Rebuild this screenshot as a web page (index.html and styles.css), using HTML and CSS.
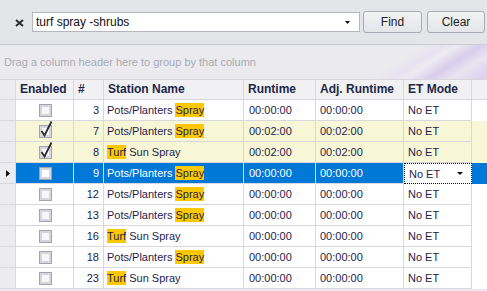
FILE: index.html
```html
<!DOCTYPE html>
<html lang="en">
<head>
    <meta charset="UTF-8">
    <title>stations</title>
    <link rel="stylesheet" href="styles.css">
</head>
<body>

<div class="toolbar">
    <svg class="close-icon" width="9" height="8" viewBox="0 0 9 8"><path d="M1 1 L8 7 M8 1 L1 7" stroke="#2b2b30" stroke-width="2"/></svg>
    <div class="combo">
        <span>turf spray -shrubs</span>
        <svg class="arrow" width="5" height="3" viewBox="0 0 5 3"><path d="M0 0 H5 L2.5 3 Z" fill="#111"/></svg>
    </div>
    <div class="btn find">Find</div>
    <div class="btn clear">Clear</div>
</div>

<div class="group-panel">Drag a column header here to group by that column</div>

<div class="grid">
    <div class="row head">
        <div class="cell ind"></div>
        <div class="cell">Enabled</div>
        <div class="cell">#</div>
        <div class="cell">Station Name</div>
        <div class="cell">Runtime</div>
        <div class="cell">Adj. Runtime</div>
        <div class="cell">ET Mode</div>
        <div class="cell fill"></div>
    </div>

    <div class="row">
        <div class="cell ind"></div>
        <div class="cell chk"><span class="box"></span></div>
        <div class="cell num">3</div>
        <div class="cell name">Pots/Planters <mark>Spray</mark></div>
        <div class="cell time">00:00:00</div>
        <div class="cell">00:00:00</div>
        <div class="cell">No ET</div>
        <div class="cell fill"></div>
    </div>
    <div class="row checked">
        <div class="cell ind"></div>
        <div class="cell chk"><span class="box"><svg viewBox="0 0 14 18" width="14" height="18"><path d="M2.5 11 L5.5 15.5 L12.5 1.5" fill="none" stroke="#2a2a2e" stroke-width="1.8"/></svg></span></div>
        <div class="cell num">7</div>
        <div class="cell name">Pots/Planters <mark>Spray</mark></div>
        <div class="cell time">00:02:00</div>
        <div class="cell">00:02:00</div>
        <div class="cell">No ET</div>
        <div class="cell fill"></div>
    </div>
    <div class="row checked">
        <div class="cell ind"></div>
        <div class="cell chk"><span class="box"><svg viewBox="0 0 14 18" width="14" height="18"><path d="M2.5 11 L5.5 15.5 L12.5 1.5" fill="none" stroke="#2a2a2e" stroke-width="1.8"/></svg></span></div>
        <div class="cell num">8</div>
        <div class="cell name"><mark>Turf</mark> Sun Spray</div>
        <div class="cell time">00:02:00</div>
        <div class="cell">00:02:00</div>
        <div class="cell">No ET</div>
        <div class="cell fill"></div>
    </div>
    <div class="row selected">
        <div class="cell ind"><svg width="4" height="7" viewBox="0 0 4 7"><path d="M0 0 L4 3.5 L0 7 Z" fill="#111"/></svg></div>
        <div class="cell chk"><span class="box"></span></div>
        <div class="cell num">9</div>
        <div class="cell name">Pots/Planters <mark>Spray</mark></div>
        <div class="cell time">00:00:00</div>
        <div class="cell">00:00:00</div>
        <div class="cell editor">No ET
            <svg class="arrow" width="6" height="3" viewBox="0 0 6 3"><path d="M0 0 H6 L3 3 Z" fill="#111"/></svg>
        </div>
        <div class="cell fill"></div>
    </div>
    <div class="row">
        <div class="cell ind"></div>
        <div class="cell chk"><span class="box"></span></div>
        <div class="cell num">12</div>
        <div class="cell name">Pots/Planters <mark>Spray</mark></div>
        <div class="cell time">00:00:00</div>
        <div class="cell">00:00:00</div>
        <div class="cell">No ET</div>
        <div class="cell fill"></div>
    </div>
    <div class="row">
        <div class="cell ind"></div>
        <div class="cell chk"><span class="box"></span></div>
        <div class="cell num">13</div>
        <div class="cell name">Pots/Planters <mark>Spray</mark></div>
        <div class="cell time">00:00:00</div>
        <div class="cell">00:00:00</div>
        <div class="cell">No ET</div>
        <div class="cell fill"></div>
    </div>
    <div class="row">
        <div class="cell ind"></div>
        <div class="cell chk"><span class="box"></span></div>
        <div class="cell num">16</div>
        <div class="cell name"><mark>Turf</mark> Sun Spray</div>
        <div class="cell time">00:00:00</div>
        <div class="cell">00:00:00</div>
        <div class="cell">No ET</div>
        <div class="cell fill"></div>
    </div>
    <div class="row">
        <div class="cell ind"></div>
        <div class="cell chk"><span class="box"></span></div>
        <div class="cell num">18</div>
        <div class="cell name">Pots/Planters <mark>Spray</mark></div>
        <div class="cell time">00:00:00</div>
        <div class="cell">00:00:00</div>
        <div class="cell">No ET</div>
        <div class="cell fill"></div>
    </div>
    <div class="row">
        <div class="cell ind"></div>
        <div class="cell chk"><span class="box"></span></div>
        <div class="cell num">23</div>
        <div class="cell name"><mark>Turf</mark> Sun Spray</div>
        <div class="cell time">00:00:00</div>
        <div class="cell">00:00:00</div>
        <div class="cell">No ET</div>
        <div class="cell fill"></div>
    </div>
</div>

</body>
</html>
```

FILE: styles.css
```css
body {
    margin: 0;
    font-family: 'Liberation Sans', Arial, sans-serif;
    font-size: 11px;
    color: #1f1d4a;
    background-color: #e9e9ed;
    height: 291px;
    overflow: hidden;
}
.toolbar {
    display: flex;
    align-items: center;
    height: 44px;
    padding-left: 15px;
    background-color: #e4e5e9;
    border-bottom: 1px solid #c9cad2;
}
.close-icon {
    margin-right: 8px;
    margin-top: 1px;
}
.combo {
    display: flex;
    align-items: center;
    justify-content: space-between;
    box-sizing: border-box;
    width: 328px;
    height: 20px;
    padding: 0 9px 0 3px;
    background: #fff;
    border: 1px solid #b4b6bf;
    font-size: 12px;
    color: #111;
}
.btn {
    box-sizing: border-box;
    height: 22px;
    line-height: 20px;
    text-align: center;
    border: 1px solid #a9abb4;
    border-radius: 3px;
    background: linear-gradient(#f3f3f5, #e4e5e9);
    font-size: 12px;
    color: #222;
}
.find {
    width: 59px;
    margin-left: 3px;
}
.clear {
    width: 58px;
    margin-left: 5px;
}
.group-panel {
    box-sizing: border-box;
    height: 34px;
    padding: 0 4px;
    line-height: 34px;
    color: #aaaab2;
    background:
        linear-gradient(147deg, rgba(235, 235, 239, 0) 35%, rgba(228, 220, 242, 0.6) 48%, rgba(238, 234, 245, 0.4) 55%, rgba(205, 185, 236, 0.6) 68%, rgba(230, 222, 244, 0.5) 80%, rgba(212, 196, 240, 0.6) 94%) no-repeat right top / 130px 100%,
        #ebebef;
}
.grid {
    border-top: 1px solid #d6d6dc;
}
.row {
    display: grid;
    grid-template-columns: 16px 58px 30px 140px 72px 88px 68px 1fr;
    height: 21px;
    background: #fff;
}
.cell {
    box-sizing: border-box;
    line-height: 20px;
    padding-left: 4px;
    border-right: 1px solid #d8d8de;
    border-bottom: 1px solid #d8d8de;
    white-space: nowrap;
    overflow: hidden;
}
.cell.fill {
    border: none;
}
.cell.ind {
    display: flex;
    align-items: center;
    padding-left: 6px;
    background: #ececf0;
}
.head {
    height: 20px;
    background: #f1f1f4;
}
.head .cell {
    line-height: 19px;
    font-weight: bold;
    font-size: 12px;
    color: #1d2848;
}
.head .cell.fill {
    border-bottom: 1px solid #d8d8de;
}
.cell.num {
    text-align: right;
    padding-right: 4px;
}
.cell.name {
    padding-left: 3px;
}
.cell.time {
    padding-left: 5px;
}
.cell.chk {
    display: flex;
    align-items: center;
    justify-content: center;
    padding-left: 1px;
}
.box {
    position: relative;
    box-sizing: border-box;
    width: 13px;
    height: 13px;
    border: 1px solid #a2a5b0;
    background: #f7f7f9;
    box-shadow: inset 0 0 0 2px #d6d7de;
}
.box svg {
    position: absolute;
    left: -1px;
    top: -6px;
}
mark {
    padding: 1px 0;
    background: #ffc800;
    color: #1f1d4a;
}
.checked {
    background: #f7f7d7;
}
.selected {
    background: #0078d7;
    color: #fff;
}
.selected .box {
    background: #fff;
}
.cell.editor {
    display: flex;
    align-items: center;
    justify-content: space-between;
    padding-right: 8px;
    background: #fff;
    color: #1f1d4a;
    border: 1px dotted #111;
}
```
